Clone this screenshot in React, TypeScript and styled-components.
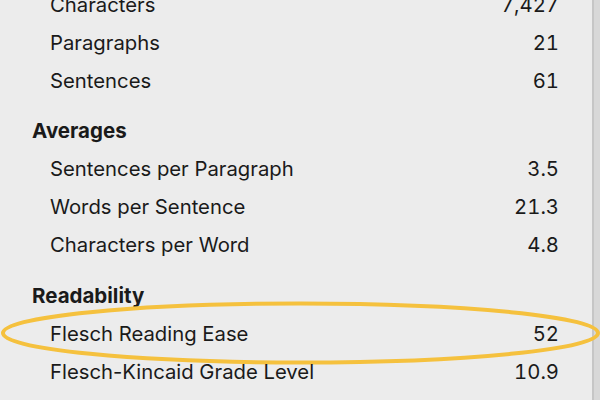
import styled, { createGlobalStyle } from "styled-components";

type Stat = {
  label: string;
  value: string;
  marked?: boolean;
};

type Section = {
  title?: string;
  rows: Stat[];
};

const sections: Section[] = [
  {
    rows: [
      { label: "Characters", value: "7,427" },
      { label: "Paragraphs", value: "21" },
      { label: "Sentences", value: "61" },
    ],
  },
  {
    title: "Averages",
    rows: [
      { label: "Sentences per Paragraph", value: "3.5" },
      { label: "Words per Sentence", value: "21.3" },
      { label: "Characters per Word", value: "4.8" },
    ],
  },
  {
    title: "Readability",
    rows: [
      { label: "Flesch Reading Ease", value: "52", marked: true },
      { label: "Flesch-Kincaid Grade Level", value: "10.9" },
    ],
  },
];

// CSS
const Global = createGlobalStyle`
  body {
    margin: 0;
    font-family: Inter, "Noto Sans", "Liberation Sans", sans-serif;
    background: #ececec;
  }
`;

const Page = styled.div`
  position: relative;
  display: flex;
  width: 600px;
  height: 400px;
  overflow: hidden;
  background: #ececec;
`;

const Panel = styled.div`
  flex: 1;
  padding: 0 33px 0 32px;
`;

const List = styled.div`
  margin-top: -15px;
`;

const Group = styled.div`
  & + & {
    margin-top: 12.5px;
  }
`;

const Heading = styled.div`
  height: 38px;
  display: flex;
  align-items: center;
  font-size: 20.5px;
  font-weight: 700;
  color: #1a1a1a;
`;

const Row = styled.div`
  position: relative;
  height: 38px;
  display: flex;
  align-items: center;
  justify-content: space-between;
  padding-left: 18px;
  font-size: 20.3px;
  color: #1a1a1a;
`;

const Value = styled.span`
  font-variant-numeric: tabular-nums;
`;

const Edge = styled.div`
  width: 6px;
  border-left: 2px solid #c6c6c6;
  background: #d8d8d8;
`;

const Ring = styled.svg`
  position: absolute;
  left: -32px;
  top: -31px;
  pointer-events: none;
`;

function Mark() {
  return (
    <Ring width="600" height="100" viewBox="0 0 600 100">
      <ellipse
        cx="300.5"
        cy="50"
        rx="297.5"
        ry="29.5"
        fill="none"
        stroke="#f5c13e"
        strokeWidth="4"
      />
    </Ring>
  );
}

function App() {
  return (
    <Page>
      <Global />
      <Panel>
        <List>
          {sections.map((s, i) => (
            <Group key={i}>
              {s.title && <Heading>{s.title}</Heading>}
              {s.rows.map((r) => (
                <Row key={r.label}>
                  <span>{r.label}</span>
                  <Value>{r.value}</Value>
                  {r.marked && <Mark />}
                </Row>
              ))}
            </Group>
          ))}
        </List>
      </Panel>
      <Edge />
    </Page>
  );
}
export default App;
